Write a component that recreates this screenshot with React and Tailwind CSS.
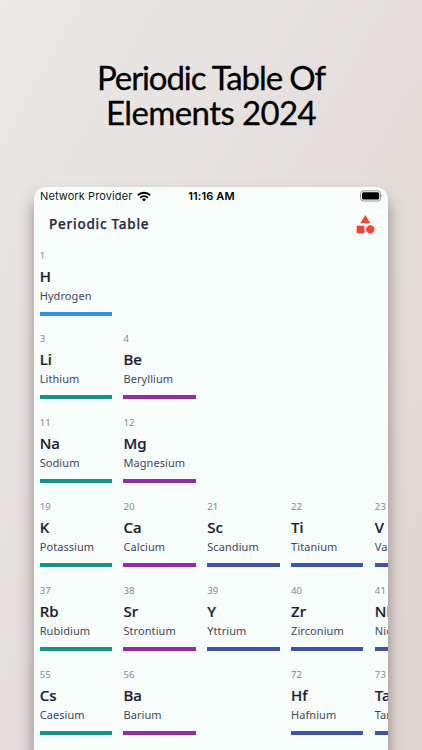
import React from "react";

const COLORS = {
  blue: "bg-[#2f92e4]",
  teal: "bg-[#129487]",
  purple: "bg-[#952aa8]",
  indigo: "bg-[#4051ad]",
};

const ROWS = [
  [[1, "H", "Hydrogen", "blue"]],
  [[3, "Li", "Lithium", "teal"], [4, "Be", "Beryllium", "purple"]],
  [[11, "Na", "Sodium", "teal"], [12, "Mg", "Magnesium", "purple"]],
  [
    [19, "K", "Potassium", "teal"],
    [20, "Ca", "Calcium", "purple"],
    [21, "Sc", "Scandium", "indigo"],
    [22, "Ti", "Titanium", "indigo"],
    [23, "V", "Vanadium", "indigo"],
  ],
  [
    [37, "Rb", "Rubidium", "teal"],
    [38, "Sr", "Strontium", "purple"],
    [39, "Y", "Yttrium", "indigo"],
    [40, "Zr", "Zirconium", "indigo"],
    [41, "Nb", "Niobium", "indigo"],
  ],
  [
    [55, "Cs", "Caesium", "teal"],
    [56, "Ba", "Barium", "purple"],
    null,
    [72, "Hf", "Hafnium", "indigo"],
    [73, "Ta", "Tantalum", "indigo"],
  ],
];

function Element({ data }) {
  if (!data) return <div className="w-[72.4px] shrink-0" />;
  const [number, symbol, name, color] = data;
  return (
    <div className="flex w-[72.4px] shrink-0 flex-col whitespace-nowrap">
      <span className="h-[14px] text-[9.6px] leading-[14px] tracking-[0.1px] text-[#858b90]">{number}</span>
      <span className="mt-[3px] h-[20px] text-[15px] font-medium leading-[20px] text-[#1b1b30] [-webkit-text-stroke:0.2px_#1b1b30]">{symbol}</span>
      <span className="mt-[2px] h-[16px] text-[11px] leading-[16px] tracking-[0.07px] text-[#454857]">{name}</span>
      <div className={`mt-[8px] h-[4px] w-full ${COLORS[color]}`} />
    </div>
  );
}

function Wifi() {
  return (
    <svg className="ml-[5px] h-[11px] w-[14px]" viewBox="0 0 14 11" fill="none" stroke="#000" strokeWidth="1.9">
      <path d="M.8 4.2a8.9 8.9 0 0 1 12.4 0M3.1 6.7a5.6 5.6 0 0 1 7.8 0" />
      <path d="M7 10.5 4.9 8.4a3 3 0 0 1 4.2 0Z" fill="#000" stroke="none" />
    </svg>
  );
}

function Battery() {
  return (
    <svg className="h-[12px] w-[23px]" viewBox="0 0 23 12">
      <rect x=".6" y=".8" width="20" height="10.2" rx="2.8" fill="none" stroke="#8f9492" />
      <rect x="2" y="2.2" width="17.2" height="7.4" rx="1.5" fill="#000" />
      <path d="M21.8 4.3v3.2c1-.4 1-2.8 0-3.2" fill="#8f9492" />
    </svg>
  );
}

function Shapes() {
  return (
    <svg className="h-[19px] w-[19px]" viewBox="0 0 19 19" fill="#f44336">
      <path d="M9.3 0 14.3 8.2H4.3Z" />
      <rect x=".7" y="10.7" width="7.6" height="7.5" />
      <circle cx="14.3" cy="14.4" r="4.2" />
    </svg>
  );
}

export default function App() {
  return (
    <div className="flex h-[750px] w-[422px] flex-col overflow-hidden bg-linear-to-br from-[#ebe8e5] via-[#e4dfdc] to-[#dfd5d2]">
      <h1 className="mt-[60px] flex h-[126.6px] shrink-0 flex-col items-center font-['Lato',sans-serif] text-[33px] font-normal leading-[35px] text-black [-webkit-text-stroke:0.3px_black]">
        <span className="h-[35px] tracking-[-1.1px]">Periodic Table Of</span>
        <span className="h-[35px] tracking-[-0.6px]">Elements 2024</span>
      </h1>
      <main className="ml-[34px] flex h-[580px] w-[354px] shrink-0 flex-col overflow-hidden rounded-t-[12px] bg-[#f6fdfb] font-['Noto_Sans',sans-serif] shadow-[0_12px_16px_rgba(65,45,40,0.5)]">
        <div className="grid h-[19px] shrink-0 grid-cols-[1fr_auto_1fr] items-center pl-[6px] pr-[5px] font-['Inter',sans-serif] text-[11px] leading-[18px]">
          <div className="flex items-center whitespace-nowrap tracking-[0.1px] text-[#171a1a]">
            Network Provider
            <Wifi />
          </div>
          <span className="font-semibold tracking-[0.15px] text-black">11:16 AM</span>
          <div className="flex justify-end">
            <Battery />
          </div>
        </div>
        <header className="flex h-[37px] shrink-0 items-center justify-between pl-[15px] pr-[13px]">
          <h2 className="text-[13.5px] font-medium tracking-[0.76px] text-[#29243d] [-webkit-text-stroke:0.25px_#29243d]">Periodic Table</h2>
          <Shapes />
        </header>
        <div className="flex flex-col pl-[5.7px] pt-[6px]">
          {ROWS.map((row, i) => (
            <div key={i} className="flex h-[83.8px] shrink-0 gap-[11.4px]">
              {row.map((data, j) => (
                <Element key={j} data={data} />
              ))}
            </div>
          ))}
        </div>
      </main>
    </div>
  );
}
